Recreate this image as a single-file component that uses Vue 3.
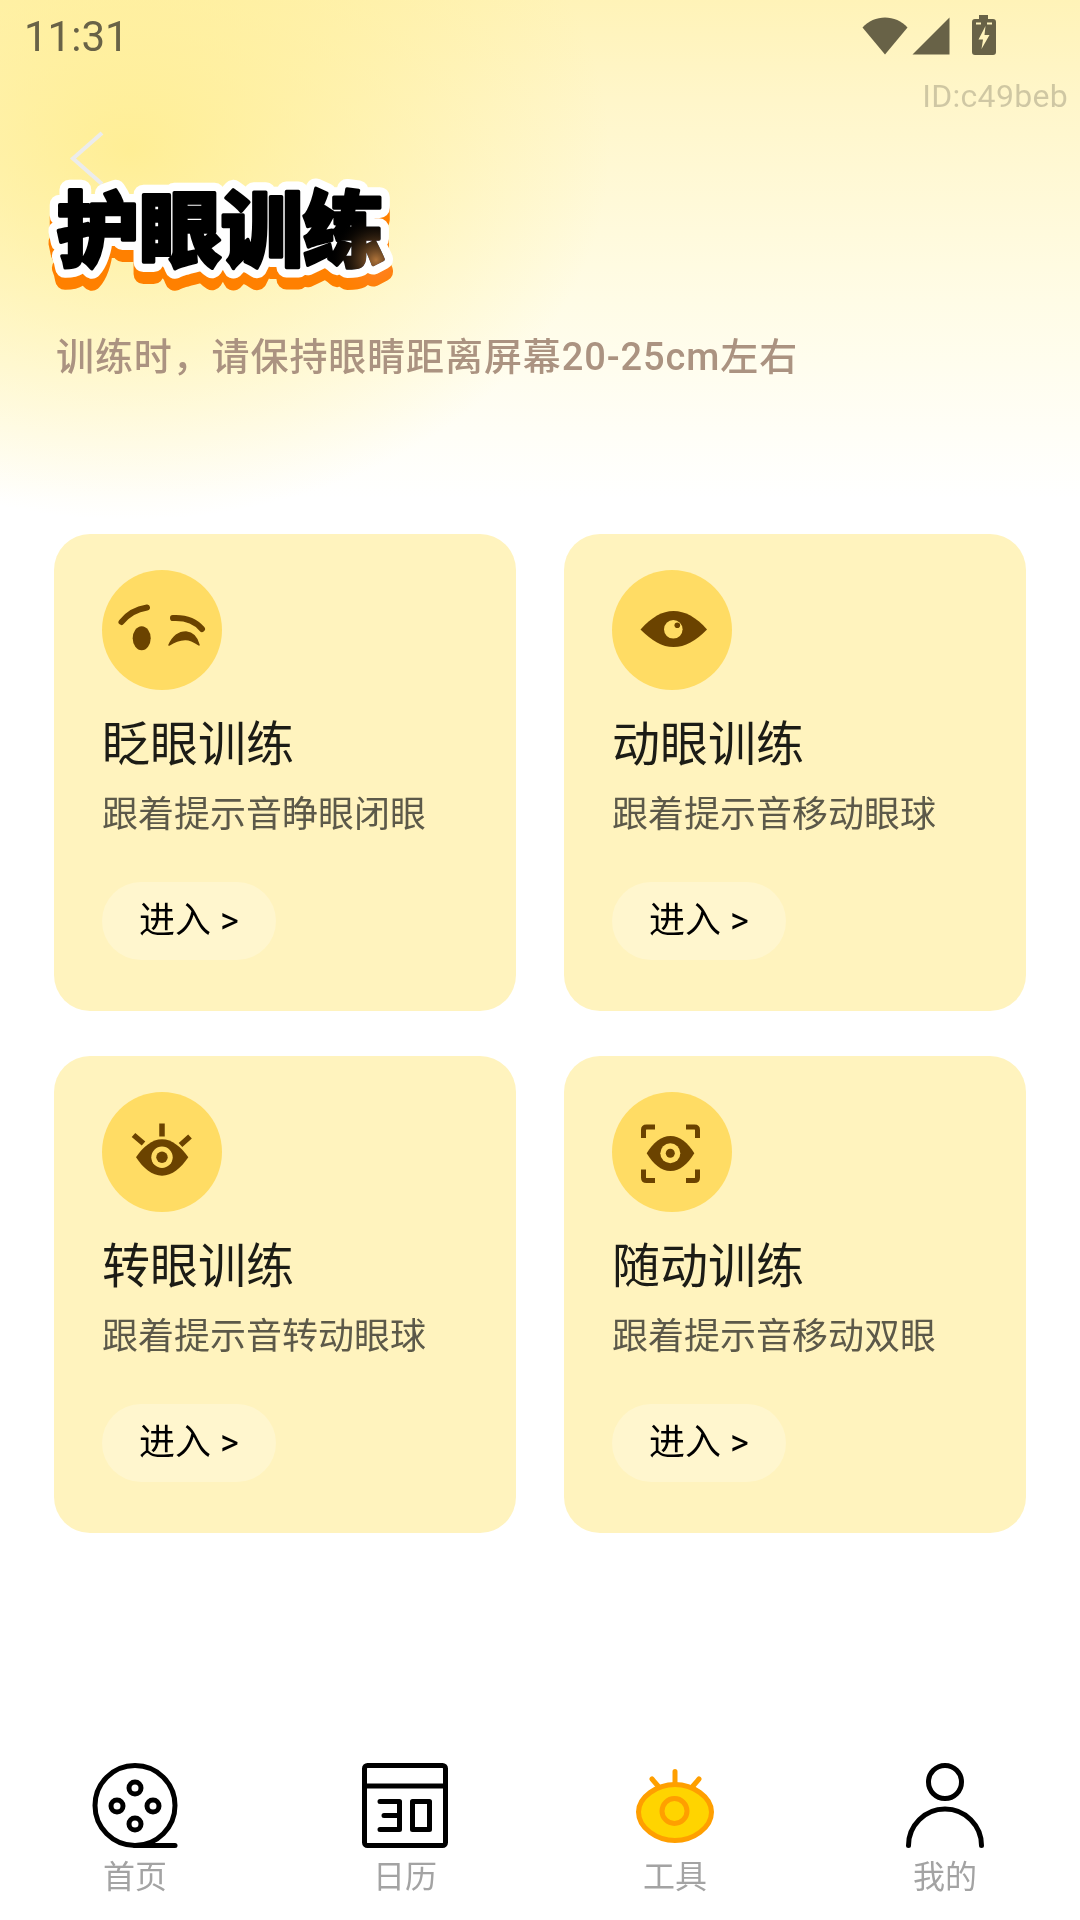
<template>
  <div class="page">
    <div class="hero">
      <div class="status-bar">
        <span class="time">11:31</span>
        <div class="status-icons">
          <svg width="46" height="38" viewBox="0 0 46 38"><path d="M0.500 10.500 C12 -3 34 -3 45.500 10.500 L23 37.500 Z" fill="#686247" /></svg>
          <svg width="38" height="38" viewBox="0 0 38 38"><path d="M37.500 0.500 V37.500 H0.500 Z" fill="#686247" /></svg>
          <svg class="battery" width="24" height="40" viewBox="0 0 24 40">
            <path d="M7 0 H16 V4 H21 Q24 4 24 7 V37 Q24 40 21 40 H3 Q0 40 0 37 V7 Q0 4 3 4 H7 Z" fill="#686247" />
            <path d="M4 8.500 H9 M15 8.500 H20" stroke="#fff3bb" stroke-width="2" />
            <path d="M13.500 11 L6.500 24.500 H11 L9.500 34 L17.500 20 H12.500 Z" fill="#fff3bb" />
          </svg>
        </div>
      </div>
      <div class="device-id">ID:c49beb</div>

      <svg class="back" width="34" height="55" viewBox="0 0 34 55">
        <path d="M32 2 L3 27.500 L32 53" fill="none" stroke="#ececec" stroke-width="4" />
      </svg>

      <svg class="hero-title" width="370" height="122" viewBox="0 0 370 122">
        <defs>
          <text id="heroText" x="17" y="90" class="hero-text">护眼训练</text>
          <radialGradient id="heroGlow">
            <stop offset="0" stop-color="#b0743a" />
            <stop offset="1" stop-color="#000" stop-opacity="0" />
          </radialGradient>
        </defs>
        <use href="#heroText" y="12" fill="#ff8000" stroke="#ff8000" stroke-width="20" stroke-linejoin="round" />
        <use href="#heroText" fill="#fff" stroke="#fff" stroke-width="20" stroke-linejoin="round" />
        <use href="#heroText" fill="#000" stroke="#000" stroke-width="3.500" stroke-linejoin="round" />
        <circle class="glow" cx="336" cy="90" r="46" fill="url(#heroGlow)" />
      </svg>

      <div class="hero-tip">训练时，请保持眼睛距离屏幕20-25cm左右</div>
    </div>

    <div class="cards">
      <div v-for="card in cards" :key="card.title" class="card">
        <div class="card-icon">
          <svg v-if="card.icon === 'blink'" width="120" height="120" viewBox="0 0 120 120">
            <path d="M19.500 52 Q29 40 45 37.500 M71 48 Q90 47 100 59" fill="none" stroke="#6b4300" stroke-width="6" stroke-linecap="round" />
            <ellipse cx="39.700" cy="68.300" rx="9" ry="12" fill="#6b4300" />
            <path d="M67 75 Q73 62 84 62 Q94 63 97 75 Q88 69 83 69.500 Q75 70 67 75 Z" fill="#6b4300" stroke="#6b4300" stroke-width="1.500" stroke-linejoin="round" />
          </svg>
          <svg v-else-if="card.icon === 'move'" width="120" height="120" viewBox="0 0 120 120">
            <path d="M28.500 59.500 C40 47 50 41 61.500 41 C73 41 84 47 95 59.500 C84 71 73 77 61.500 77 C50 77 40 71 28.500 59.500 Z" fill="#6b4300" />
            <circle cx="61.300" cy="59.300" r="9.300" fill="#ffdc64" />
            <circle cx="65.300" cy="55.300" r="2.800" fill="#6b4300" />
          </svg>
          <svg v-else-if="card.icon === 'turn'" width="120" height="120" viewBox="0 0 120 120">
            <path d="M60 31.500 V44.500 M31.500 43 L41.500 51.500 M88 44.500 L78.500 53" fill="none" stroke="#6b4300" stroke-width="5.500" />
            <path d="M34 65.300 C41 55 50 47.300 60 47.300 C70 47.300 79 55 86.300 65.300 C79 76 70 83.700 60 83.700 C50 83.700 41 76 34 65.300 Z" fill="#6b4300" />
            <circle cx="60" cy="65.300" r="10.700" fill="#ffdc64" />
            <circle cx="60" cy="65.300" r="5.700" fill="#6b4300" />
          </svg>
          <svg v-else width="120" height="120" viewBox="0 0 120 120">
            <path d="M31.500 46 V38 Q31.500 35 34.500 35 H43 M74 35 H82.500 Q85.500 35 85.500 38 V46 M31.500 77.500 V85.500 Q31.500 88.500 34.500 88.500 H43 M74 88.500 H82.500 Q85.500 88.500 85.500 85.500 V77.500" fill="none" stroke="#6b4300" stroke-width="5" />
            <path d="M34.700 61.300 C41 51 49 44 58.500 44 C68 44 76 51 82.300 61.300 C76 72 68 79 58.500 79 C49 79 41 72 34.700 61.300 Z" fill="#6b4300" />
            <circle cx="58.300" cy="61.300" r="10" fill="#ffdc64" />
            <circle cx="58.300" cy="61.300" r="4.500" fill="#6b4300" />
          </svg>
        </div>
        <div class="card-title">{{ card.title }}</div>
        <div class="card-desc">{{ card.desc }}</div>
        <div class="card-btn">进入 &gt;</div>
      </div>
    </div>

    <div class="tabbar">
      <div class="tab">
        <svg width="90" height="90" viewBox="0 0 90 90" fill="none" stroke="#000" stroke-width="5" stroke-linecap="round">
          <circle cx="45" cy="44.500" r="40" />
          <path d="M45 84.500 H85" />
          <circle cx="45" cy="27" r="6" />
          <circle cx="27" cy="45" r="6" />
          <circle cx="63" cy="45" r="6" />
          <circle cx="45" cy="63" r="6" />
        </svg>
        <span>首页</span>
      </div>
      <div class="tab">
        <svg width="90" height="90" viewBox="0 0 90 90" fill="none" stroke="#000" stroke-width="5" stroke-linecap="round" stroke-linejoin="round">
          <rect x="4.500" y="4.500" width="81" height="80" rx="3" />
          <path d="M4.500 25 H85.500" />
          <path d="M20 40.500 H39.500 V68.500 H20 M24 54.500 H39.500" />
          <rect x="52.500" y="40.500" width="17" height="28" />
        </svg>
        <span>日历</span>
      </div>
      <div class="tab">
        <svg width="90" height="90" viewBox="0 0 90 90" fill="none" stroke="#ff9f00" stroke-width="5" stroke-linecap="round">
          <path d="M45 10.500 V24 M22 18 L28 25 M69 18 L63 25" />
          <path d="M8.500 51 C8.500 36 27 23.500 45 23.500 C63 23.500 81.500 36 81.500 51 C81.500 67 63 79.500 45 79.500 C27 79.500 8.500 67 8.500 51 Z" fill="#ffd400" />
          <circle cx="44.500" cy="50" r="12.500" />
        </svg>
        <span>工具</span>
      </div>
      <div class="tab">
        <svg width="90" height="90" viewBox="0 0 90 90" fill="none" stroke="#000" stroke-width="5" stroke-linecap="round">
          <circle cx="45" cy="21" r="16.500" />
          <path d="M8.500 84.500 A36.500 36.500 0 0 1 81.500 84.500" />
        </svg>
        <span>我的</span>
      </div>
    </div>
  </div>
</template>

<script setup>
const cards = [
  { icon: 'blink', title: '眨眼训练', desc: '跟着提示音睁眼闭眼' },
  { icon: 'move', title: '动眼训练', desc: '跟着提示音移动眼球' },
  { icon: 'turn', title: '转眼训练', desc: '跟着提示音转动眼球' },
  { icon: 'follow', title: '随动训练', desc: '跟着提示音移动双眼' }
]
</script>

<style scoped>
.page {
  width: 1080px;
  height: 1920px;
  overflow: hidden;
  display: flex;
  flex-direction: column;
  font-family: Roboto, "Noto Sans CJK SC", sans-serif;
  background:
    radial-gradient(480px 370px at 130px 150px, rgba(255, 236, 135, 0.8), rgba(255, 236, 135, 0) 100%) no-repeat,
    linear-gradient(180deg, #fff3b8 0, #fff6ca 100px, #fffce6 300px, #ffffff 500px) no-repeat,
    #fff;
}

.hero {
  height: 534px;
  flex-shrink: 0;
  display: flex;
  flex-direction: column;
}

.status-bar {
  height: 72px;
  display: flex;
  justify-content: space-between;
  padding-left: 24px;
  flex-shrink: 0;
}
.time { font-size: 42px; line-height: 74px; color: #686247; }
.status-icons { display: flex; gap: 4px; padding: 17px 84px 0 0; align-items: flex-start; }
.battery { margin: -2px 0 0 18px; }

.device-id {
  height: 44px;
  padding-right: 12px;
  margin-top: 2px;
  text-align: right;
  font-size: 32px;
  line-height: 44px;
  letter-spacing: 0.3px;
  color: rgba(0, 0, 0, 0.19);
}

.back { margin: 13px 0 0 70px; flex-shrink: 0; display: block; }

.hero-title {
  display: block;
  flex-shrink: 0;
  margin: -16px 0 0 40px;
}
.hero-text {
  font-family: "Noto Sans CJK SC", sans-serif;
  font-size: 82px;
  font-weight: 900;
}
.glow { mix-blend-mode: lighten; }

.hero-tip {
  margin: 38px 0 0 56px;
  font-size: 38px;
  line-height: 54px;
  font-weight: 500;
  color: #ab9381;
  letter-spacing: 0.9px;
}

.cards {
  display: grid;
  grid-template-columns: 462px 462px;
  grid-auto-rows: 477px;
  column-gap: 48px;
  row-gap: 45px;
  margin: 0 54px;
}

.card {
  background: #fff3be;
  border-radius: 36px;
  padding: 36px 48px 0;
}
.card-icon {
  width: 120px;
  height: 120px;
  border-radius: 50%;
  background: #ffdc64;
}
.card-icon svg { display: block; }
.card-title {
  margin-top: 23px;
  font-size: 48px;
  line-height: 64px;
  color: #1c1c16;
}
.card-desc {
  margin-top: 14px;
  font-size: 36px;
  line-height: 48px;
  color: #5c5949;
}
.card-btn {
  margin-top: 43px;
  box-sizing: border-box;
  width: 174px;
  height: 78px;
  padding-bottom: 9px;
  border-radius: 39px;
  background: #fff6ce;
  display: flex;
  align-items: center;
  justify-content: center;
  font-size: 36px;
  color: #000;
}

.tabbar {
  margin-top: auto;
  display: flex;
  height: 159px;
  background: #fff;
}
.tab {
  width: 270px;
  display: flex;
  flex-direction: column;
  align-items: center;
  font-size: 32px;
  line-height: 40px;
  color: #a3a3a3;
}
.tab svg { display: block; margin-bottom: 6px; }
</style>

<style>
body { background: #fff; }
</style>
